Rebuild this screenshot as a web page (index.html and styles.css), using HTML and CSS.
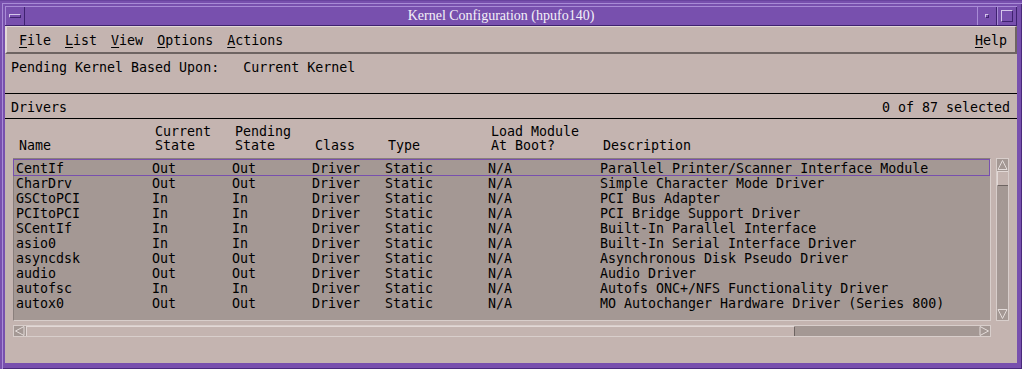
FILE: index.html
```html
<!DOCTYPE html>
<html lang="en">
<head>
  <meta charset="UTF-8" />
  <title>Kernel Configuration (hpufo140)</title>
  <link rel="stylesheet" href="styles.css">
</head>
<body>
  <div class="window">
    <div class="titlebar">
      <div class="tbtn menu-btn"><span class="bar"></span></div>
      <div class="title">Kernel Configuration (hpufo140)</div>
      <div class="tbtn min-btn"><span class="dot"></span></div>
      <div class="tbtn max-btn"><span class="sq"></span></div>
    </div>

    <div class="client">
      <div class="menubar">
        <span class="menu"><u>F</u>ile</span>
        <span class="menu"><u>L</u>ist</span>
        <span class="menu"><u>V</u>iew</span>
        <span class="menu"><u>O</u>ptions</span>
        <span class="menu"><u>A</u>ctions</span>
        <span class="spacer"></span>
        <span class="menu"><u>H</u>elp</span>
      </div>

      <div class="pending">Pending Kernel Based Upon:   Current Kernel</div>

      <div class="section-bar">
        <span>Drivers</span>
        <span>0 of 87 selected</span>
      </div>

      <div class="heads">
        <span>Name</span>
        <span>Current<br>State</span>
        <span>Pending<br>State</span>
        <span>Class</span>
        <span>Type</span>
        <span>Load Module<br>At Boot?</span>
        <span>Description</span>
      </div>

      <div class="list-area">
        <div class="list-col">
          <div class="list" id="list"></div>
          <div class="hscroll">
            <div class="arrow">
              <svg width="12" height="12" viewBox="0 0 12 12"><polygon points="10,1.5 1.5,6 10,10.5" fill="none" stroke="#e4dcda" stroke-width="1"/></svg>
            </div>
            <div class="hthumb"></div>
            <div class="htrough"></div>
            <div class="arrow">
              <svg width="12" height="12" viewBox="0 0 12 12"><polygon points="2,1.5 10.5,6 2,10.5" fill="none" stroke="#e4dcda" stroke-width="1"/></svg>
            </div>
          </div>
        </div>
        <div class="vscroll">
          <div class="varrow">
            <svg width="11" height="12" viewBox="0 0 11 12"><polygon points="1,10.5 5.5,1.5 10,10.5" fill="none" stroke="#e4dcda" stroke-width="1"/></svg>
          </div>
          <div class="vthumb"></div>
          <div class="vtrough"></div>
          <div class="varrow">
            <svg width="11" height="12" viewBox="0 0 11 12"><polygon points="1,1.5 5.5,10.5 10,1.5" fill="none" stroke="#e4dcda" stroke-width="1"/></svg>
          </div>
        </div>
      </div>
    </div>
  </div>

<script>
  const drivers = [
    ["CentIf", "Out", "Out", "Parallel Printer/Scanner Interface Module"],
    ["CharDrv", "Out", "Out", "Simple Character Mode Driver"],
    ["GSCtoPCI", "In", "In", "PCI Bus Adapter"],
    ["PCItoPCI", "In", "In", "PCI Bridge Support Driver"],
    ["SCentIf", "In", "In", "Built-In Parallel Interface"],
    ["asio0", "In", "In", "Built-In Serial Interface Driver"],
    ["asyncdsk", "Out", "Out", "Asynchronous Disk Pseudo Driver"],
    ["audio", "Out", "Out", "Audio Driver"],
    ["autofsc", "In", "In", "Autofs ONC+/NFS Functionality Driver"],
    ["autox0", "Out", "Out", "MO Autochanger Hardware Driver (Series 800)"]
  ];

  const list = document.getElementById("list");

  drivers.forEach((d, i) => {
    const row = document.createElement("div");
    row.className = "row" + (i === 0 ? " focus" : "");
    const cells = [d[0], d[1], d[2], "Driver", "Static", "N/A", d[3]];
    cells.forEach(text => {
      const cell = document.createElement("span");
      cell.textContent = text;
      row.appendChild(cell);
    });
    list.appendChild(row);
  });
</script>
</body>
</html>
```

FILE: styles.css
```css
* { box-sizing: border-box; }
html, body {
  margin: 0;
  padding: 0;
  width: 1022px;
  height: 369px;
  overflow: hidden;
}
body {
  background: #7850ae;
  font-family: "DejaVu Sans Mono", monospace;
  font-size: 13.3px;
  color: #000;
}

.window {
  width: 1022px;
  height: 369px;
  padding: 5px 5px 6px 5px;
  background: #7850ae;
  border-top: 1px solid #6a44a0;
  box-shadow: inset 2px 2px 0 #7850ae, inset 3px 3px 0 #a88bd6, inset -1px -1px 0 #4a2a7c;
  display: flex;
  flex-direction: column;
}

/* title bar */
.titlebar {
  display: flex;
  height: 20px;
  border-top: 1px solid #a88bd6;
  border-bottom: 1px solid #3f2270;
}
.tbtn {
  width: 20px;
  display: flex;
  align-items: center;
  justify-content: center;
  border-left: 1px solid #a88bd6;
  border-right: 1px solid #3f2270;
}
.menu-btn .bar {
  width: 12px;
  height: 4px;
  border: 1px solid #d4c6ea;
  border-bottom-color: #3f2270;
  border-right-color: #3f2270;
}
.min-btn .dot {
  width: 4px;
  height: 4px;
  border: 1px solid #d4c6ea;
  border-bottom-color: #3f2270;
  border-right-color: #3f2270;
}
.max-btn .sq {
  width: 12px;
  height: 12px;
  border: 1px solid #d4c6ea;
  border-bottom-color: #3f2270;
  border-right-color: #3f2270;
}
.title {
  flex: 1;
  text-align: center;
  color: #f4f0f8;
  font-family: "Liberation Serif", serif;
  font-size: 14px;
  line-height: 18px;
}

/* client area */
.client {
  flex: 1;
  background: #c4b4b0;
  display: flex;
  flex-direction: column;
}

.menubar {
  display: flex;
  height: 28px;
  align-items: center;
  padding: 1px 8px 0 12px;
  border-top: 1px solid #e2d8d6;
  border-left: 2px solid #e2d8d6;
  border-bottom: 2px solid #6e6462;
  border-right: 2px solid #6e6462;
  background: #c4b4b0;
}
.menu { margin-right: 14px; }
.menu u { text-underline-offset: 2px; }
.spacer { flex: 1; }
.menubar .menu:last-child { margin-right: 0; }

.pending {
  height: 40px;
  padding: 6px 0 0 6px;
  line-height: 15px;
  white-space: pre;
  border-bottom: 1px solid #000;
}

.section-bar {
  height: 25px;
  padding: 6px 7px 0 6px;
  line-height: 15px;
  display: flex;
  justify-content: space-between;
  border-bottom: 1px solid #000;
}

.heads, .row {
  display: grid;
  grid-template-columns: 136px 80px 80px 73px 103px 112px 1fr;
}
.heads {
  height: 39px;
  padding: 0 0 5px 14px;
  line-height: 14px;
  align-items: end;
}

.list-area {
  display: flex;
  gap: 5px;
  padding-left: 8px;
}
.list-col {
  width: 978px;
  display: flex;
  flex-direction: column;
  gap: 4px;
}
.list {
  height: 163px;
  background: #a49894;
  border: 1px solid #d8cecb;
  border-top-color: #8a7f7c;
  border-left-color: #8a7f7c;
  padding: 1px 0 0 0;
}
.row {
  height: 15px;
  line-height: 15px;
  padding: 1px 0 0 2px;
  margin-right: 1px;
}
.row.focus {
  outline: 1px solid #7850ae;
}

.hscroll {
  height: 12px;
  display: flex;
  background: #a49894;
  border: 1px solid #d8cecb;
}
.hscroll .arrow {
  width: 12px;
  display: flex;
  align-items: center;
  justify-content: center;
  margin-top: -1px;
}
.hthumb {
  width: 769px;
  background: #c4b4b0;
  border-top: 1px solid #e2d8d6;
  border-left: 1px solid #e2d8d6;
  border-right: 1px solid #6e6462;
}
.htrough { flex: 1; }

.vscroll {
  width: 13px;
  height: 163px;
  background: #a49894;
  border: 1px solid #d8cecb;
  display: flex;
  flex-direction: column;
}
.varrow {
  height: 12px;
  display: flex;
  align-items: center;
  justify-content: center;
}
.vthumb {
  height: 15px;
  background: #c4b4b0;
  border-top: 1px solid #e2d8d6;
  border-left: 1px solid #e2d8d6;
  border-bottom: 1px solid #6e6462;
}
.vtrough { flex: 1; }
```
